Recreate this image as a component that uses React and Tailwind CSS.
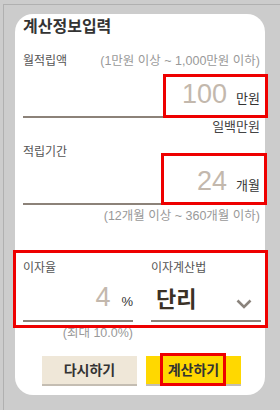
import React from 'react';

// red annotation boxes drawn over the form
const marks = [
  'left-[163px] top-[74px] w-[105px] h-[44px]',
  'left-[161px] top-[153px] w-[106px] h-[52px]',
  'left-[13px] top-[250px] w-[255px] h-[78px]',
  'left-[160px] top-[353px] w-[66px] h-[33px]',
];

const Chevron = () => (
  <svg width="16" height="10" viewBox="0 0 16 10" className="mt-[10px]">
    <polyline points="1.5,1.5 8,8 14.5,1.5" fill="none" stroke="#8a837c" strokeWidth="2.6" />
  </svg>
);

const App = () => {
  return (
    <div className="relative w-[280px] h-[410px] bg-[#cccccc] overflow-hidden font-['Liberation_Sans','Noto_Sans_CJK_KR',sans-serif]">
      <div className="ml-[3px] mt-[4px] h-[406px] border-l border-t border-[#b0b0b0] pl-[11px] pt-[9px]">
        <div className="w-[250px] h-[381px] bg-white rounded-[18px] pl-[8px] pr-[5px]">
          {/* title */}
          <div className="h-[26px] leading-[26px] text-[16px] font-bold text-[#333]">계산정보입력</div>

          {/* monthly amount */}
          <div className="mt-[11px] h-[20px] flex items-center justify-between text-[12px]">
            <span className="text-[#555]">월적립액</span>
            <span className="text-[12.5px] text-[#999]">(1만원 이상 ~ 1,000만원 이하)</span>
          </div>
          <div className="h-[47px] border-b-2 border-[#8c8279] flex items-end justify-end pb-[8px]">
            <div className="flex items-baseline gap-[9px]">
              <span className="text-[27px] leading-none text-[#c3b8ad]">100</span>
              <span className="text-[13px] text-[#333]">만원</span>
            </div>
          </div>
          <div className="h-[18px] leading-[18px] text-right text-[13px] text-[#444]">일백만원</div>

          {/* period */}
          <div className="mt-[6px] h-[20px] flex items-center text-[12px] text-[#555]">적립기간</div>
          <div className="h-[43px] border-b-2 border-[#8c8279] flex items-end justify-end pb-[8px]">
            <div className="flex items-baseline gap-[9px]">
              <span className="text-[27px] leading-none text-[#c3b8ad]">24</span>
              <span className="text-[13px] text-[#333]">개월</span>
            </div>
          </div>
          <div className="h-[22px] leading-[22px] text-right text-[12.5px] text-[#999]">(12개월 이상 ~ 360개월 이하)</div>

          {/* rate + method */}
          <div className="mt-[31px] grid grid-cols-[110px_110px] gap-x-[18px]">
            <div>
              <div className="h-[20px] flex items-center text-[12px] text-[#555]">이자율</div>
              <div className="h-[44px] border-b-2 border-[#8c8279] flex items-end justify-end pb-[9px]">
                <div className="flex items-baseline gap-[11px]">
                  <span className="text-[27px] leading-none text-[#c3b8ad]">4</span>
                  <span className="text-[13px] text-[#333]">%</span>
                </div>
              </div>
              <div className="h-[22px] leading-[22px] text-right text-[12.5px] text-[#999]">(최대 10.0%)</div>
            </div>
            <div>
              <div className="h-[20px] flex items-center text-[12px] text-[#555]">이자계산법</div>
              <div className="h-[44px] border-b-2 border-[#8c8279] flex items-center justify-between pl-[5px] pr-[9px]">
                <span className="text-[22px] font-bold text-[#3b3126]">단리</span>
                <Chevron />
              </div>
            </div>
          </div>

          {/* buttons */}
          <div className="mt-[12px] flex justify-center gap-[9px]">
            <button className="w-[95px] h-[30px] bg-[#efe7d8] border-b-2 border-[#c4bdb2] text-[14px] font-bold text-[#333]">다시하기</button>
            <button className="w-[95px] h-[30px] bg-[#ffd800] border-b-2 border-[#c4bdb2] text-[14px] font-bold text-[#333]">계산하기</button>
          </div>
        </div>
      </div>

      {marks.map((m) => (
        <div key={m} className={`absolute border-[3px] border-[#ee0000] pointer-events-none ${m}`} />
      ))}
    </div>
  );
};

export default App;
